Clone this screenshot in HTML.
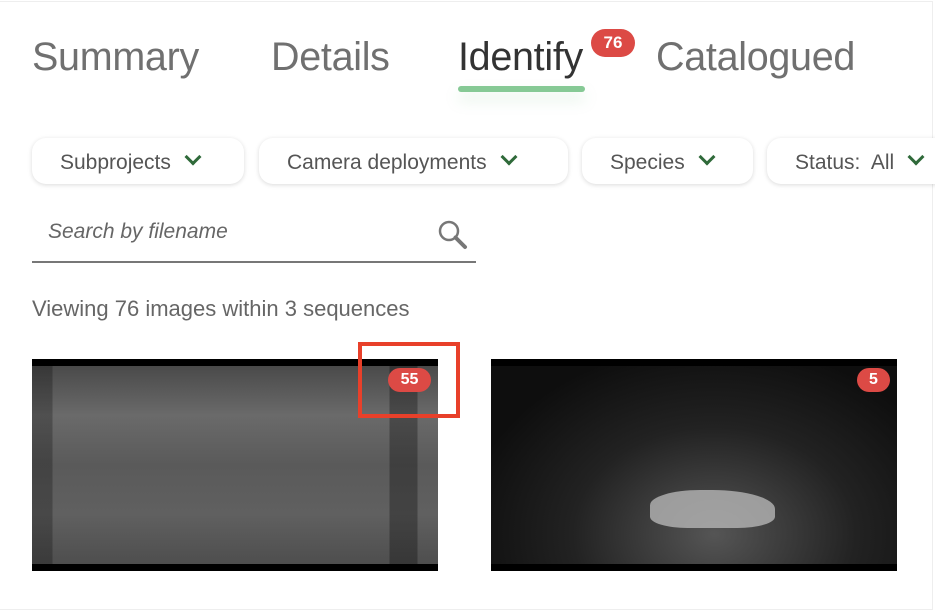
<!DOCTYPE html>
<html><head><style>
body{margin:0;width:935px;height:611px;background:#fff;font-family:"Liberation Sans",sans-serif;position:relative;overflow:hidden}
.frame{position:absolute;left:0;top:1px;width:932px;height:607px;border:1px solid #eee;border-left:none}
.tab{position:absolute;top:35px;font-size:39.5px;color:#707070;letter-spacing:-0.3px}
.ul{position:absolute;left:458px;top:86px;width:127px;height:6px;border-radius:3px;background:#86c995;box-shadow:0 8px 14px rgba(134,201,149,.25)}
.badge{position:absolute;background:#dc4a45;color:#fff;font-weight:bold;border-radius:14px;text-align:center}
.pill{position:absolute;top:138px;height:46px;border-radius:14px;background:#fff;box-shadow:0 1px 5px rgba(0,0,0,.15);font-size:21px;color:#555;line-height:50px;box-sizing:border-box;padding-left:28px;white-space:nowrap;overflow:hidden}
.chev{display:inline-block;width:9px;height:9px;border-right:3.5px solid #2f6a3a;border-bottom:3.5px solid #2f6a3a;transform:rotate(45deg);margin-left:16px;position:relative;top:-6px}
.photo{position:absolute;top:359px;width:406px;height:212px;border-top:7px solid #000;border-bottom:7px solid #000;box-sizing:border-box}
</style></head><body>
<div class="frame"></div>
<div class="tab" style="left:32px">Summary</div>
<div class="tab" style="left:271px">Details</div>
<div class="tab" style="left:458px;color:#333">Identify</div>
<div class="tab" style="left:656px">Catalogued</div>
<div class="ul"></div>
<div class="badge" style="left:591px;top:29px;width:44px;height:28px;line-height:28px;font-size:17px">76</div>
<div class="pill" style="left:32px;width:212px">Subprojects<span class="chev"></span></div>
<div class="pill" style="left:259px;width:309px">Camera deployments<span class="chev"></span></div>
<div class="pill" style="left:582px;width:171px">Species<span class="chev"></span></div>
<div class="pill" style="left:767px;width:200px">Status:&nbsp; All<span class="chev"></span></div>
<div style="position:absolute;left:48px;top:220px;font-size:21px;font-style:italic;color:#666">Search by filename</div>
<svg style="position:absolute;left:436px;top:218px" width="32" height="32" viewBox="0 0 32 32"><circle cx="13" cy="13" r="9" fill="none" stroke="#777" stroke-width="2.5"/><line x1="19.5" y1="19.5" x2="29" y2="29" stroke="#777" stroke-width="4" stroke-linecap="round"/></svg>
<div style="position:absolute;left:32px;top:261px;width:444px;height:2px;background:#777"></div>
<div style="position:absolute;left:32px;top:296px;font-size:22px;color:#666">Viewing 76 images within 3 sequences</div>
<div class="photo" style="left:32px;background:linear-gradient(90deg,rgba(0,0,0,.25) 0 5%,transparent 5% 88%,rgba(0,0,0,.3) 88% 95%,transparent 95%),linear-gradient(180deg,#4a4a4a 0%,#6a6a6a 25%,#5a5a5a 50%,#606060 75%,#4e4e4e 100%)"></div>
<div class="photo" style="left:491px;background:radial-gradient(ellipse at 55% 85%,#555,#222 45%,#0e0e0e 80%)"></div>
<div style="position:absolute;left:650px;top:490px;width:125px;height:38px;border-radius:40% 50% 30% 30%;background:#b5b5b5;opacity:.8"></div>
<div class="badge" style="left:388px;top:368px;width:43px;height:24px;line-height:24px;font-size:16px">55</div>
<div class="badge" style="left:857px;top:368px;width:33px;height:24px;line-height:24px;font-size:16px">5</div>
<div style="position:absolute;left:358px;top:342px;width:102px;height:76px;border:4px solid #e8402a;box-sizing:border-box"></div>
</body></html>
